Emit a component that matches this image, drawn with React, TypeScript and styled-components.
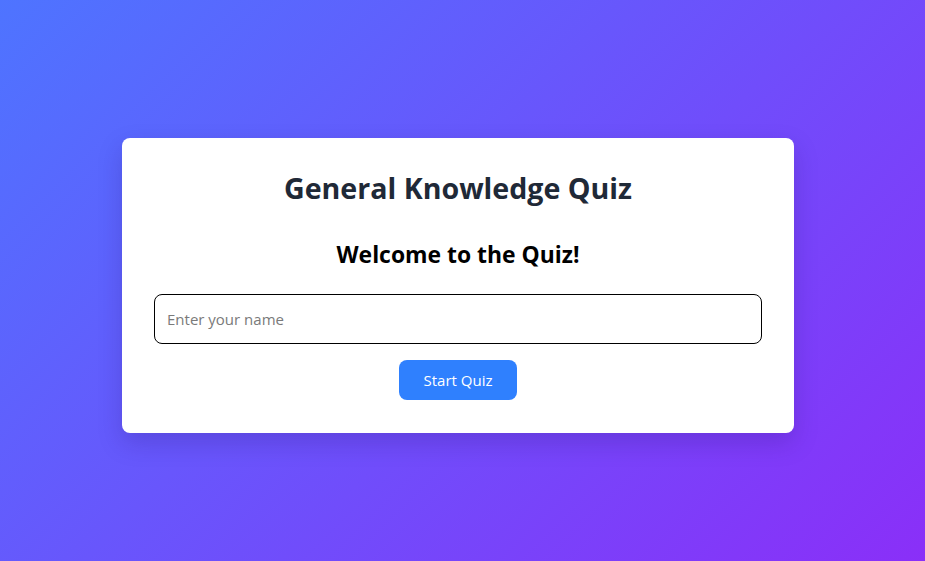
import React, { useState } from "react";
import styled, { createGlobalStyle } from "styled-components";

const Global = createGlobalStyle`
  html, body { margin: 0; padding: 0; }
  body {
    font-family: "Open Sans", "Noto Sans", sans-serif;
  }
  * { box-sizing: border-box; }
`;

const Page = styled.div`
  width: 925px;
  height: 561px;
  background: linear-gradient(135deg, #4e74ff 0%, #8a2ff8 100%);
  display: flex;
  align-items: center;
  justify-content: center;
  padding: 9px 9px 0 0;
`;

const Card = styled.div`
  width: 672px;
  background: #ffffff;
  border-radius: 8px;
  padding: 31px 32px 33px;
  box-shadow: 0 10px 24px rgba(40, 20, 120, 0.22);
  display: flex;
  flex-direction: column;
  align-items: center;
`;

const Title = styled.h1`
  margin: 0;
  font-size: 28.6px;
  line-height: 38px;
  font-weight: 700;
  color: #1f2937;
`;

const Subtitle = styled.h2`
  margin: 33px 0 0;
  font-size: 22.9px;
  line-height: 30px;
  font-weight: 700;
  color: #000;
`;

const NameInput = styled.input`
  margin-top: 24px;
  width: 100%;
  height: 50px;
  border: 1px solid #000;
  border-radius: 8px;
  padding: 0 12px;
  font-family: inherit;
  font-size: 15px;
  color: #111;
  outline: none;
  &::placeholder { color: #7a7a7a; }
`;

const StartButton = styled.button`
  margin-top: 16px;
  height: 40px;
  padding: 0 25px;
  border: none;
  border-radius: 8px;
  background: #2f80fe;
  color: #fff;
  font-family: inherit;
  font-size: 15px;
  cursor: pointer;
`;

export default function App() {
  const [name, setName] = useState("");
  return (
    <>
      <Global />
      <Page>
        <Card>
          <Title>General Knowledge Quiz</Title>
          <Subtitle>Welcome to the Quiz!</Subtitle>
          <NameInput
            placeholder="Enter your name"
            value={name}
            onChange={(e) => setName(e.target.value)}
          />
          <StartButton>Start Quiz</StartButton>
        </Card>
      </Page>
    </>
  );
}
